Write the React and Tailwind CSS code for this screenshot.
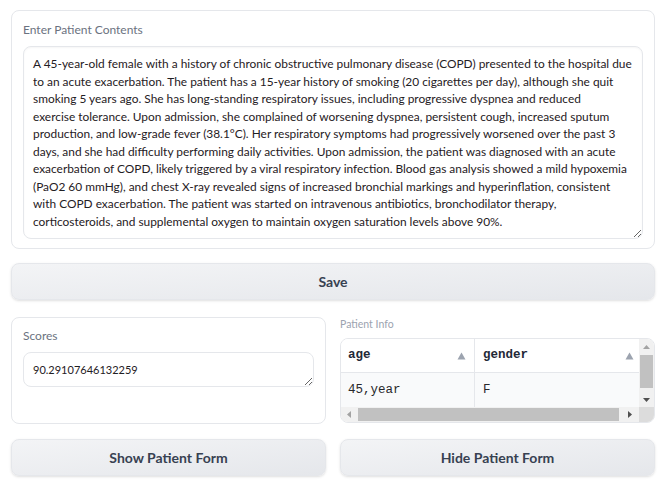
import React from "react";

const lines = [
  "A 45-year-old female with a history of chronic obstructive pulmonary disease (COPD) presented to the hospital due",
  "to an acute exacerbation. The patient has a 15-year history of smoking (20 cigarettes per day), although she quit",
  "smoking 5 years ago. She has long-standing respiratory issues, including progressive dyspnea and reduced",
  "exercise tolerance. Upon admission, she complained of worsening dyspnea, persistent cough, increased sputum",
  "production, and low-grade fever (38.1°C). Her respiratory symptoms had progressively worsened over the past 3",
  "days, and she had difficulty performing daily activities. Upon admission, the patient was diagnosed with an acute",
  "exacerbation of COPD, likely triggered by a viral respiratory infection. Blood gas analysis showed a mild hypoxemia",
  "(PaO2 60 mmHg), and chest X-ray revealed signs of increased bronchial markings and hyperinflation, consistent",
  "with COPD exacerbation. The patient was started on intravenous antibiotics, bronchodilator therapy,",
  "corticosteroids, and supplemental oxygen to maintain oxygen saturation levels above 90%.",
];

const font = { fontFamily: "Lato, 'Noto Sans', sans-serif" };
const mono = { fontFamily: "'Liberation Mono', 'Courier New', monospace" };

const Button = ({ children, className = "" }) => (
  <button
    className={`h-[37px] rounded-lg border border-[#e5e7eb] bg-gradient-to-br from-[#f3f4f6] to-[#e5e7eb] text-[14px] font-bold text-[#374151] shadow-sm ${className}`}
  >
    {children}
  </button>
);

const SortArrow = () => (
  <svg width="9" height="8" viewBox="0 0 9 8" className="shrink-0">
    <path d="M4.5 0.5 L8.5 7.5 L0.5 7.5 Z" fill="#9ca3af" />
  </svg>
);

export default function App() {
  return (
    <div className="w-[659px] h-[490px] bg-white pl-[11px] pr-[4px] pt-[10px] flex flex-col text-[#27272a]" style={font}>
      {/* contents panel */}
      <div className="rounded-lg border border-[#e5e7eb] px-[11px] pt-[11px] pb-[9px] flex flex-col">
        <label className="text-[12px] leading-[15px] text-[#6b7280] mb-[9px]">Enter Patient Contents</label>
        <textarea
          readOnly
          wrap="off"
          value={lines.join("\n")}
          className="h-[193px] w-full overflow-hidden rounded-lg border border-[#e5e7eb] px-[9px] pt-[8px] pb-[8px] text-[11.9px] leading-[17.5px] text-[#1f2024] shadow-[inset_0_1px_2px_rgba(0,0,0,0.04)] outline-none"
          style={font}
        />
      </div>

      <Button className="mt-[14px] w-full">Save</Button>

      <div className="mt-[17px] flex gap-[14px]">
        {/* scores */}
        <div className="w-[315px] h-[107px] rounded-lg border border-[#e5e7eb] px-[11px] pt-[10px] flex flex-col">
          <label className="text-[12px] leading-[15px] text-[#6b7280] mb-[9px]">Scores</label>
          <textarea
            readOnly
            value="90.29107646132259"
            className="h-[35px] w-full overflow-hidden rounded-lg border border-[#e5e7eb] px-[9px] pt-[8px] text-[11px] leading-[17px] text-[#1f2024] outline-none"
            style={font}
          />
        </div>

        {/* patient info */}
        <div className="flex-1 flex flex-col">
          <div className="text-[10.5px] leading-[13px] text-[#9ca3af] pt-[1px] mb-[7px]">Patient Info</div>
          <div className="h-[85px] rounded-lg border border-[#e5e7eb] overflow-hidden flex flex-col" style={mono}>
            <div className="flex h-[68px]">
              <div className="flex-1 flex flex-col">
                <div className="flex h-[34px] border-b border-[#e5e7eb] bg-white">
                  <div className="w-[134px] border-r border-[#e5e7eb] flex items-center justify-between pl-[7px] pr-[8px]">
                    <span className="text-[12.5px] font-bold text-[#1f2937]" style={mono}>age</span>
                    <SortArrow />
                  </div>
                  <div className="flex-1 flex items-center justify-between pl-[8px] pr-[5px]">
                    <span className="text-[12.5px] font-bold text-[#1f2937]" style={mono}>gender</span>
                    <SortArrow />
                  </div>
                </div>
                <div className="flex flex-1 bg-[#f9fafb]">
                  <div className="w-[134px] border-r border-[#e5e7eb] flex items-center pl-[7px] text-[12.5px] text-[#27272a]" style={mono}>45,year</div>
                  <div className="flex-1 flex items-center pl-[8px] text-[12.5px] text-[#27272a]" style={mono}>F</div>
                </div>
              </div>
              {/* vertical scrollbar */}
              <div className="w-[15px] bg-[#f1f1f1] flex flex-col items-center">
                <svg width="15" height="16" viewBox="0 0 15 16"><path d="M4 10 L7.5 6 L11 10 Z" fill="#a3a3a3" /></svg>
                <div className="w-[13px] h-[33px] bg-[#c1c1c1]" />
                <div className="flex-1" />
                <svg width="15" height="14" viewBox="0 0 15 14"><path d="M4 5 L7.5 9 L11 5 Z" fill="#505050" /></svg>
              </div>
            </div>
            {/* horizontal scrollbar */}
            <div className="flex h-[15px] bg-[#f1f1f1]">
              <div className="flex-1 flex items-center">
                <svg width="17" height="15" viewBox="0 0 17 15"><path d="M10 4 L6 7.5 L10 11 Z" fill="#a3a3a3" /></svg>
                <div className="h-[13px] flex-1 bg-[#c1c1c1]" />
                <svg width="20" height="15" viewBox="0 0 20 15"><path d="M9 4 L13 7.5 L9 11 Z" fill="#505050" /></svg>
              </div>
              <div className="w-[15px] bg-[#dcdcdc]" />
            </div>
          </div>
        </div>
      </div>

      <div className="mt-[15px] flex gap-[14px]">
        <Button className="w-[315px]">Show Patient Form</Button>
        <Button className="flex-1">Hide Patient Form</Button>
      </div>
    </div>
  );
}
